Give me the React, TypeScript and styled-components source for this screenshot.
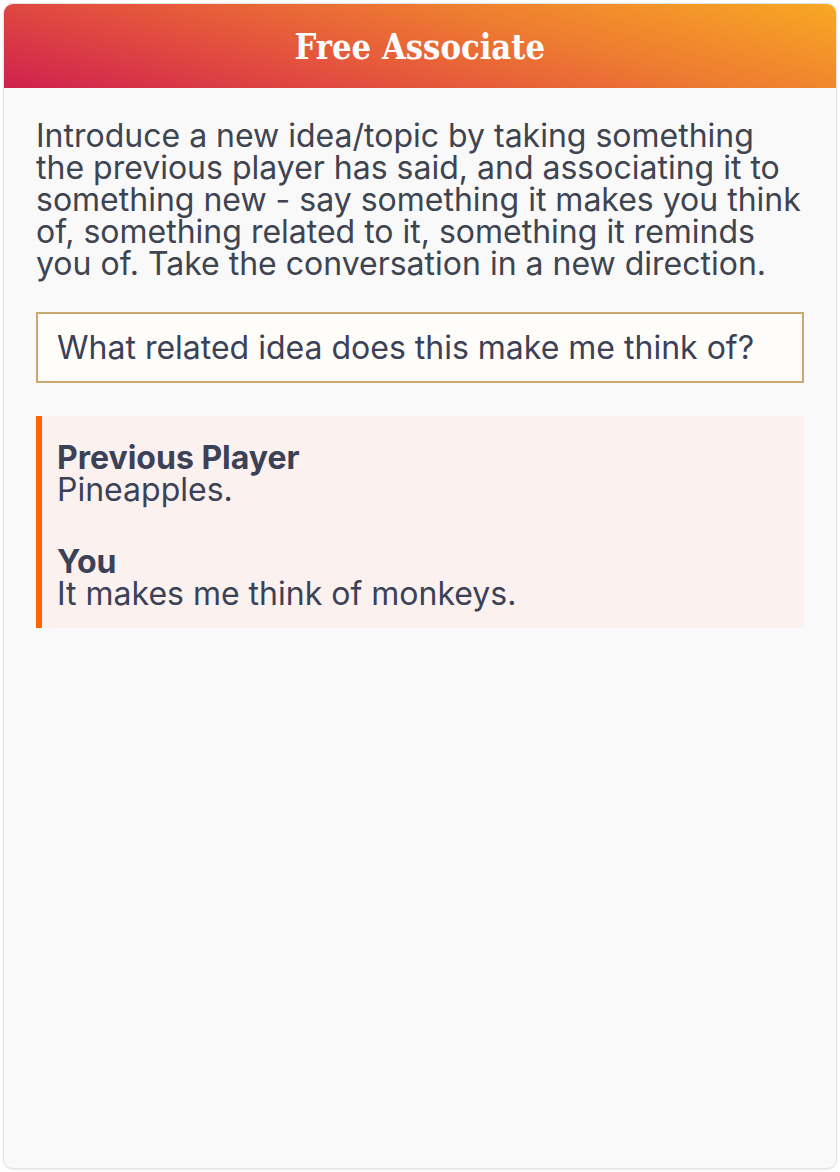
import styled, { createGlobalStyle } from 'styled-components';

const GlobalStyle = createGlobalStyle`
  html, body {
    margin: 0;
    padding: 0;
    background: #ffffff;
  }
  body {
    font-family: Inter, "Noto Sans", sans-serif;
  }
`;

interface ILine {
  speaker: string;
  text: string;
}

const lines: ILine[] = [
  { speaker: 'Previous Player', text: 'Pineapples.' },
  { speaker: 'You', text: 'It makes me think of monkeys.' },
];

const App = () => {
  return (
    <>
      <GlobalStyle />
      <Page>
        <Card>
          <Header>
            <Title>Free Associate</Title>
          </Header>
          <Body>
            <Intro>
              Introduce a new idea/topic by taking something the previous player has said, and
              associating it to something new - say something it makes you think of, something
              related to it, something it reminds you of. Take the conversation in a new direction.
            </Intro>
            <Prompt>What related idea does this make me think of?</Prompt>
            <Dialogue>
              {lines.map((line, i) => (
                <Turn key={i}>
                  <Speaker>{line.speaker}</Speaker>
                  <Said>{line.text}</Said>
                </Turn>
              ))}
            </Dialogue>
          </Body>
        </Card>
      </Page>
    </>
  );
};

const Page = styled.div`
  padding: 3px;
  height: 1172px;
  box-sizing: border-box;
`;

const Card = styled.div`
  height: 100%;
  display: flex;
  flex-direction: column;
  background: #f9f9f9;
  border: 1px solid #e4e4e4;
  border-radius: 10px;
  box-shadow: 0 1px 3px rgba(0, 0, 0, 0.08);
  overflow: hidden;
  box-sizing: border-box;
`;

const Header = styled.div`
  height: 84px;
  flex-shrink: 0;
  display: flex;
  align-items: center;
  justify-content: center;
  background: linear-gradient(15deg, #d0214f 0%, #e4533d 35%, #ee7d30 65%, #f8a823 100%);
`;

const Title = styled.h1`
  margin: 0;
  font-family: "DejaVu Serif Condensed", "DejaVu Serif", "Liberation Serif", serif;
  font-weight: 700;
  font-size: 36px;
  color: #ffffff;
  transform: scaleX(0.95);
`;

const Body = styled.div`
  display: flex;
  flex-direction: column;
  padding: 32px 32px 0;
`;

const Intro = styled.p`
  margin: 0;
  font-size: 32px;
  line-height: 32px;
  color: #3e4450;
`;

const Prompt = styled.div`
  margin-top: 32px;
  height: 71px;
  box-sizing: border-box;
  display: flex;
  align-items: center;
  padding: 0 19px;
  background: #fffdf9;
  border: 2px solid #c9a970;
  font-size: 32px;
  color: #3b4157;
`;

const Dialogue = styled.div`
  margin-top: 33px;
  display: flex;
  flex-direction: column;
  gap: 40px;
  padding: 26px 15px 18px;
  background: #fbf1ef;
  border-left: 6px solid #ff6600;
`;

const Turn = styled.div`
  display: flex;
  flex-direction: column;
`;

const Speaker = styled.div`
  font-size: 32px;
  font-weight: 700;
  line-height: 32px;
  color: #3b4157;
`;

const Said = styled.div`
  font-size: 32px;
  line-height: 32px;
  color: #3b4157;
`;

export default App;
